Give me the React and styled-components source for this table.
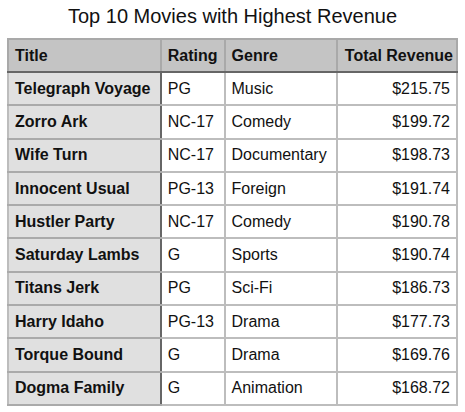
import React from 'react';
import styled, { createGlobalStyle } from 'styled-components';

const GlobalStyle = createGlobalStyle`
  body {
    margin: 0;
    background: #ffffff;
    font-family: "Liberation Sans", Arial, sans-serif;
    color: #111;
  }
`

const Page = styled.div`
  width: 465px;
  height: 412px;
  padding: 4px 7px 0 7px;
  box-sizing: border-box;
`

const Caption = styled.h1`
  margin: 0 0 10px 0;
  font-size: 20px;
  font-weight: 400;
  text-align: center;
  line-height: 24px;
  color: #111;
`

const Table = styled.table`
  width: 451px;
  border-collapse: collapse;
  border: 2px solid #a9a9a9;
  font-size: 16px;
  line-height: 18px;
`

const HeadCell = styled.th`
  background: #c4c4c4;
  font-weight: 700;
  text-align: ${p => (p.$right ? 'right' : 'left')};
  padding: 0 ${p => (p.$right ? '3px' : '6px')} 0 6px;
  height: 31px;
  white-space: nowrap;
  border: 2px solid #a9a9a9;
  border-bottom: 2px solid #666;
`

const Cell = styled.td`
  height: 31.3px;
  padding: 0 6px;
  border: 2px solid #bdbdbd;
  text-align: ${p => (p.$right ? 'right' : 'left')};
  background: #fff;
  white-space: nowrap;
`

const TitleCell = styled(Cell)`
  background: #e0e0e0;
  font-weight: 700;
  border-right: 2px solid #666;
  border-top-color: #aaa;
  border-bottom-color: #aaa;
`

const movies = [
  ['Telegraph Voyage', 'PG', 'Music', '$215.75'],
  ['Zorro Ark', 'NC-17', 'Comedy', '$199.72'],
  ['Wife Turn', 'NC-17', 'Documentary', '$198.73'],
  ['Innocent Usual', 'PG-13', 'Foreign', '$191.74'],
  ['Hustler Party', 'NC-17', 'Comedy', '$190.78'],
  ['Saturday Lambs', 'G', 'Sports', '$190.74'],
  ['Titans Jerk', 'PG', 'Sci-Fi', '$186.73'],
  ['Harry Idaho', 'PG-13', 'Drama', '$177.73'],
  ['Torque Bound', 'G', 'Drama', '$169.76'],
  ['Dogma Family', 'G', 'Animation', '$168.72'],
]

export default function App() {
  return (
    <Page>
      <GlobalStyle />
      <Caption>Top 10 Movies with Highest Revenue</Caption>
      <Table>
        <colgroup>
          <col style={{ width: '154px' }} />
          <col style={{ width: '63px' }} />
          <col style={{ width: '114px' }} />
          <col style={{ width: '120px' }} />
        </colgroup>
        <thead>
          <tr>
            <HeadCell>Title</HeadCell>
            <HeadCell>Rating</HeadCell>
            <HeadCell>Genre</HeadCell>
            <HeadCell $right>Total Revenue</HeadCell>
          </tr>
        </thead>
        <tbody>
          {movies.map(([title, rating, genre, revenue]) => (
            <tr key={title}>
              <TitleCell>{title}</TitleCell>
              <Cell>{rating}</Cell>
              <Cell>{genre}</Cell>
              <Cell $right>{revenue}</Cell>
            </tr>
          ))}
        </tbody>
      </Table>
    </Page>
  )
}
